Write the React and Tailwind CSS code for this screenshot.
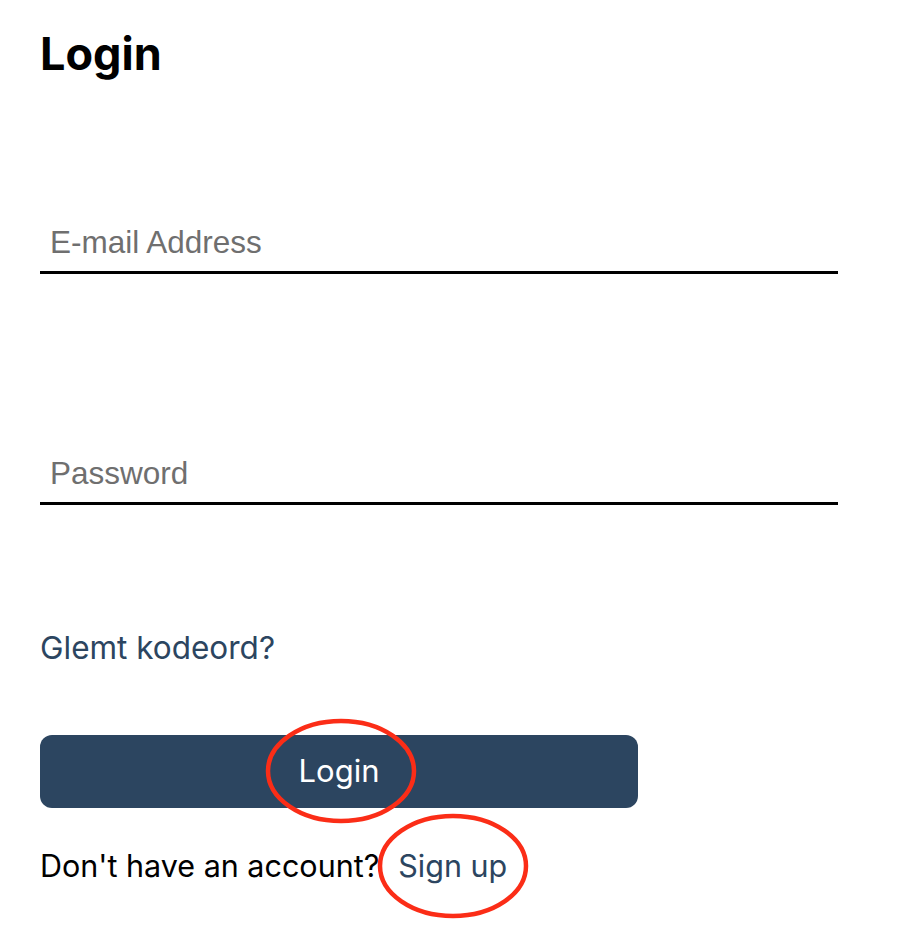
import React from 'react';

const navy = 'text-[#2c4560]';

const Field = ({ placeholder, type = 'text' }) => (
  <div className="w-[798px] border-b-[3px] border-black">
    <input
      type={type}
      placeholder={placeholder}
      className="w-full h-[57px] px-[10px] text-[31.5px] text-black placeholder:text-[#6f6f6f] outline-none bg-transparent font-['Liberation_Sans',Arial,sans-serif]"
    />
  </div>
);

export default function App() {
  return (
    <div className="relative min-h-[926px] w-[908px] bg-white px-[40px] pt-[26px] font-['Inter','Noto_Sans',sans-serif]">
      <h1 className="text-[45px] leading-[56px] font-bold text-black">Login</h1>

      <div className="mt-[132px]">
        <Field placeholder="E-mail Address" />
      </div>
      <div className="mt-[171px]">
        <Field placeholder="Password" type="password" />
      </div>

      <a href="#" className={`block mt-[123px] text-[31.5px] leading-[40px] ${navy}`}>
        Glemt kodeord?
      </a>

      <button className="mt-[67px] w-[598px] h-[73px] rounded-[12px] bg-[#2c4560] text-white text-[31px]">
        Login
      </button>

      <p className="mt-[38px] text-[30.5px] leading-[40px] text-black">
        Don't have an account?
        <a href="#" className={`ml-[19px] ${navy}`}>Sign up</a>
      </p>

      {/* annotation rings */}
      <svg className="absolute left-0 top-0 pointer-events-none" width="908" height="926">
        <ellipse cx="341" cy="771" rx="73" ry="50" fill="none" stroke="#fb2d17" strokeWidth="4.5" />
        <ellipse cx="453" cy="866" rx="73" ry="50" fill="none" stroke="#fb2d17" strokeWidth="4.5" />
      </svg>
    </div>
  );
}
